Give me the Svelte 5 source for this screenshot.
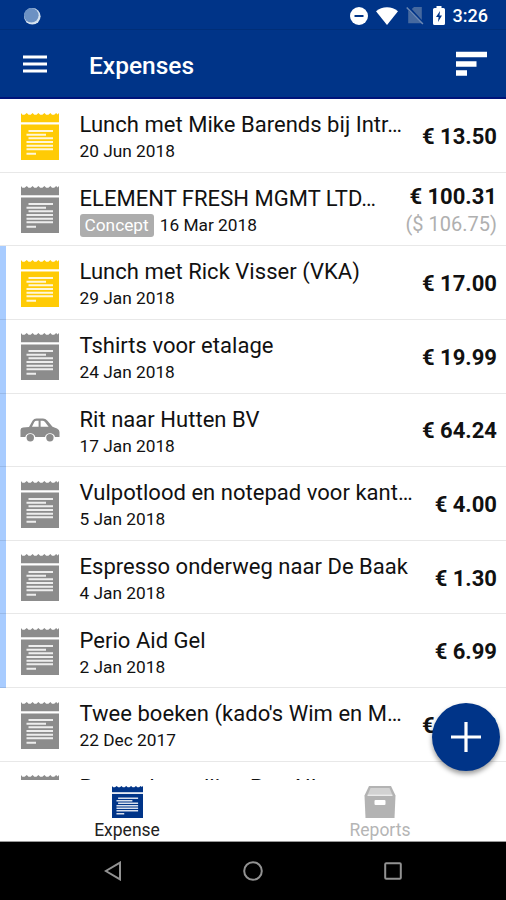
<script>
  const EXPENSES = [
    { title: 'Lunch met Mike Barends bij Intr…', date: '20 Jun 2018', amount: '€ 13.50', icon: 'receipt', color: 'yellow' },
    { title: 'ELEMENT FRESH MGMT LTD…', date: '16 Mar 2018', amount: '€ 100.31', original: '($ 106.75)', concept: true, icon: 'receipt' },
    { title: 'Lunch met Rick Visser (VKA)', date: '29 Jan 2018', amount: '€ 17.00', icon: 'receipt', color: 'yellow', marked: true },
    { title: 'Tshirts voor etalage', date: '24 Jan 2018', amount: '€ 19.99', icon: 'receipt', marked: true },
    { title: 'Rit naar Hutten BV', date: '17 Jan 2018', amount: '€ 64.24', icon: 'car', marked: true },
    { title: 'Vulpotlood en notepad voor kant…', date: '5 Jan 2018', amount: '€ 4.00', icon: 'receipt', marked: true },
    { title: 'Espresso onderweg naar De Baak', date: '4 Jan 2018', amount: '€ 1.30', icon: 'receipt', marked: true },
    { title: 'Perio Aid Gel', date: '2 Jan 2018', amount: '€ 6.99', icon: 'receipt', marked: true },
    { title: "Twee boeken (kado's Wim en M…", date: '22 Dec 2017', amount: '€ 25.98', icon: 'receipt' },
    { title: 'Retour bestelling PostNL', date: '', amount: '', icon: 'receipt' },
  ];
</script>

{#snippet receipt()}
  <svg class="receipt" viewBox="0 0 38 47" preserveAspectRatio="none">
    <path d="M0 0L1.4 1.8H3.6L5.8 0L7.5 1.8H9.7L11.6 0L13.3 1.8H15.5L17.4 0L19.2 1.8H21.4L23.4 0L25.2 1.8H27.4L29.4 0L31 1.8H33.2L35.2 0L36.5 1.6L38 0V9.3H0Z" fill="currentColor" />
    <path d="M0 11.6H38V47H0Z" fill="currentColor" />
    <path d="M7.5 18H32M5.5 21.7H25M7.5 25.3H32M5.5 29H32M5.5 32.7H32M5.5 36.3H32M5.5 40.8H15" stroke="#fff" stroke-width="2" opacity="0.85" />
  </svg>
{/snippet}

<div class="screen">
  <div class="status">
    <svg class="sync" width="18" height="18" viewBox="0 0 18 18">
      <circle cx="9.3" cy="9.3" r="8.3" fill="#d5e2ef" />
      <circle cx="8.3" cy="8.3" r="7.3" fill="#6c91c3" />
    </svg>
    <div class="status-right">
      <svg width="18" height="18" viewBox="0 0 18 18">
        <circle cx="9" cy="9" r="9" fill="#fff" />
        <path d="M4.5 9H13.5" stroke="#003488" stroke-width="2" />
      </svg>
      <svg width="22" height="18" viewBox="0 0 22 18">
        <path d="M0 4.2C6-1.2 16-1.2 22 4.2L11 18Z" fill="#fff" />
      </svg>
      <svg width="18" height="19" viewBox="0 0 18 19">
        <path d="M2.2 4.2L15.8 17.3H2.2ZM5.8 3L8 1H15.8V14Z" fill="#46699f" />
        <path d="M.7 1.5L16.9 18" stroke="#6c88b3" stroke-width="1.5" />
      </svg>
      <svg class="battery" width="12" height="19" viewBox="0 0 12 19">
        <path d="M3.5 0H8.5V2H10.5Q12 2 12 3.5V17.5Q12 19 10.5 19H1.5Q0 19 0 17.5V3.5Q0 2 1.5 2H3.5Z" fill="#fff" />
        <path d="M7 5L3 11H5.6L5 16L9 9.6H6.5Z" fill="#003488" />
      </svg>
      <span class="clock">3:26</span>
    </div>
  </div>

  <header>
    <svg width="24" height="18" viewBox="0 0 24 18">
      <path d="M0 2H24M0 9H24M0 16H24" stroke="#fff" stroke-width="2.8" />
    </svg>
    <h1>Expenses</h1>
    <svg width="31" height="26" viewBox="0 0 31 26">
      <path d="M0 3.5H31M0 13H20.5M0 22H11" stroke="#fff" stroke-width="5.6" />
    </svg>
  </header>

  <main>
    {#each EXPENSES as e}
      <div class="row" class:marked={e.marked}>
        <div class="icon {e.color}">
          {#if e.icon === 'car'}
            <svg class="car" width="40" height="24" viewBox="0 0 40 24">
              <path fill-rule="evenodd" d="M9 9L12.5 2.7Q14 .5 16.5 .5H23Q25.5 .5 27.2 2.4L32.5 8.8L37 10.5Q39.5 11.5 39.5 14V19H35A5.2 5.2 0 0 0 25 19H15.3A5.2 5.2 0 0 0 5.3 19H.5V12Q.5 9.7 3 9.4ZM12 8.8H18.6V2.8H16.5Q15 2.8 14.3 4ZM20.6 8.8H28.6L25 4Q24 2.8 22.5 2.8H20.6Z" fill="currentColor" />
              <circle cx="10.3" cy="19.7" r="3.7" fill="currentColor" />
              <circle cx="29.9" cy="19.7" r="3.7" fill="currentColor" />
            </svg>
          {:else}
            {@render receipt()}
          {/if}
        </div>
        <div class="info">
          <div class="title">{e.title}</div>
          {#if e.date}
            <div class="meta">
              {#if e.concept}<span class="tag">Concept</span>{/if}
              <span>{e.date}</span>
            </div>
          {/if}
        </div>
        {#if e.amount}
          <div class="amounts">
            <div class="amount">{e.amount}</div>
            {#if e.original}<div class="original">{e.original}</div>{/if}
          </div>
        {/if}
      </div>
    {/each}
  </main>

  <button class="fab" aria-label="Add expense">
    <svg width="30" height="30" viewBox="0 0 30 30">
      <path d="M15 0V30M0 15H30" stroke="#fff" stroke-width="3.2" />
    </svg>
  </button>

  <nav class="tabs">
    <div class="tab active">
      {@render receipt()}
      <span>Expense</span>
    </div>
    <div class="tab">
      <svg width="32" height="32" viewBox="0 0 32 32">
        <path d="M5 0H27L31.5 9.5L30.5 32H1.5L.5 9.5Z" fill="#b3b3b3" />
        <path d="M6.5 2H25.5L28.3 9H3.7Z" fill="#d2d2d2" />
        <path d="M3.5 9.3H28.5" stroke="#f2f2f2" stroke-width="1.2" />
        <rect x="10.5" y="14" width="11" height="5" rx="1" fill="#fff" />
      </svg>
      <span>Reports</span>
    </div>
  </nav>

  <div class="system">
    <svg width="18" height="20" viewBox="0 0 18 20">
      <path d="M16 1.6V18.4L1.8 10Z" />
    </svg>
    <svg width="20" height="20" viewBox="0 0 20 20">
      <circle cx="10" cy="10" r="8.8" />
    </svg>
    <svg width="18" height="18" viewBox="0 0 18 18">
      <rect x="1.2" y="1.2" width="15.6" height="15.6" rx="1" />
    </svg>
  </div>
</div>

<style>
  :global(body) {
    margin: 0;
    background: #fff;
  }

  .screen {
    position: relative;
    display: flex;
    flex-direction: column;
    width: 506px;
    height: 900px;
    overflow: hidden;
    font-family: Roboto, sans-serif;
    color: #111;
    background: #fff;
  }

  svg {
    display: block;
    flex: none;
  }

  .status {
    box-sizing: border-box;
    display: flex;
    justify-content: space-between;
    align-items: center;
    height: 30px;
    padding: 2px 18px 0 23px;
    border-bottom: 1.5px solid #002e78;
    background: #003488;
  }

  .status-right {
    display: flex;
    align-items: center;
    gap: 8px;
  }

  .battery { margin-left: 1px; }

  .clock {
    font-size: 18px;
    font-weight: 500;
    line-height: 20px;
    color: #fff;
  }

  header {
    box-sizing: border-box;
    display: flex;
    align-items: center;
    height: 69px;
    padding: 1px 19px 0 23px;
    border-bottom: 2px solid #00147a;
    background: #003488;
  }

  h1 {
    flex: 1;
    margin: 3px 0 0 42px;
    font-size: 24.5px;
    font-weight: 500;
    line-height: 30px;
    color: #fff;
  }

  main {
    height: 681px;
    overflow: hidden;
  }

  .row {
    box-sizing: border-box;
    display: flex;
    height: 73.65px;
    padding: 0 9px 0 20px;
    border-bottom: 1.5px solid rgba(0, 0, 0, 0.09);
  }

  .row.marked { background: linear-gradient(to right, #a8ccff 6.5px, transparent 6.5px) border-box; }

  .icon {
    display: flex;
    justify-content: center;
    width: 40px;
    padding-top: 13.5px;
    color: #8c8c8c;
  }

  .icon.yellow { color: #ffcb05; }

  .receipt {
    width: 38px;
    height: 47px;
  }

  .car { margin-top: 11px; }

  .info {
    flex: 1;
    margin-left: 19.5px;
    padding-top: 11.2px;
    white-space: nowrap;
  }

  .title {
    font-size: 22px;
    line-height: 30px;
    letter-spacing: 0.03px;
  }

  .meta {
    display: flex;
    align-items: center;
    gap: 6px;
    height: 23px;
    font-size: 17.3px;
    line-height: 23px;
  }

  .tag {
    padding: 0 5px;
    border-radius: 3px;
    background: #adadad;
    color: #fff;
  }

  .amounts {
    display: flex;
    flex-direction: column;
    justify-content: center;
    padding-top: 3px;
    text-align: right;
    white-space: nowrap;
  }

  .amount {
    font-size: 22px;
    font-weight: 700;
    line-height: 28px;
  }

  .original {
    font-size: 20px;
    line-height: 27px;
    color: #b0b0b0;
  }

  .fab {
    position: absolute;
    left: 432px;
    top: 703px;
    display: flex;
    align-items: center;
    justify-content: center;
    width: 68px;
    height: 68px;
    padding: 0;
    border: none;
    border-radius: 50%;
    background: #003488;
    box-shadow: 0 3px 5px rgba(0, 0, 0, 0.4);
  }

  .tabs {
    box-sizing: border-box;
    display: flex;
    height: 62px;
    padding-top: 6px;
    border-bottom: 1px solid #999;
    background: #fff;
  }

  .tab {
    flex: 1;
    display: flex;
    flex-direction: column;
    align-items: center;
    padding-left: 1px;
    font-size: 17.5px;
    line-height: 20px;
    color: #b5b5b5;
  }

  .tab span { margin-top: 2px; }
  .tab.active { color: #003488; }
  .tab.active span { color: #222; }

  .tab .receipt {
    width: 31px;
    height: 32px;
  }

  .system {
    display: flex;
    flex: 1;
    align-items: center;
    justify-content: space-between;
    padding: 0 104px;
    background: #000;
  }

  .system svg {
    fill: none;
    stroke: #929292;
    stroke-width: 2;
  }
</style>
